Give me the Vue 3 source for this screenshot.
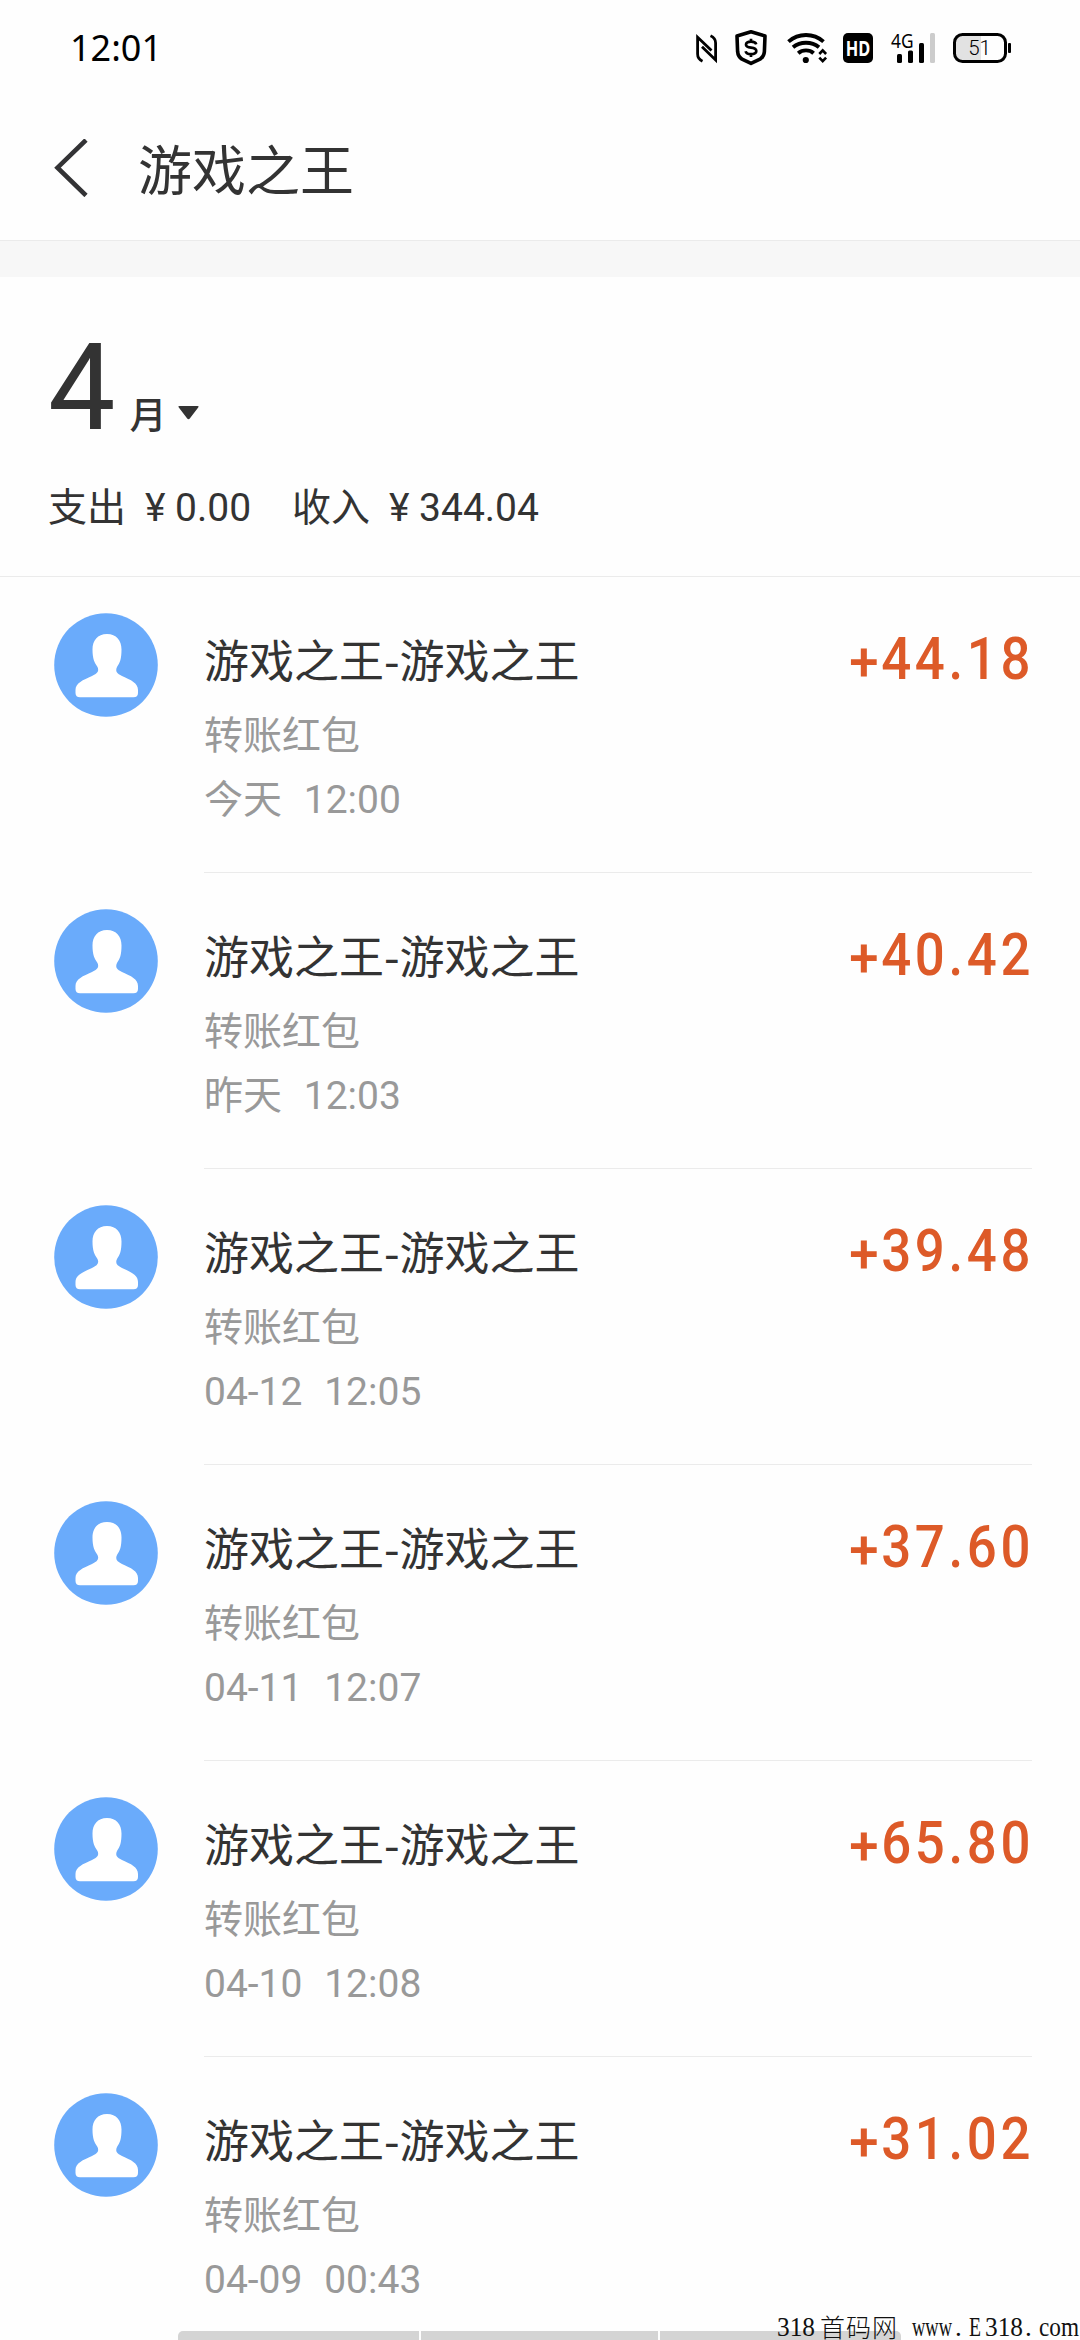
<script setup>
const entries = [
  { time: '今天  12:00', amount: '44.18' },
  { time: '昨天  12:03', amount: '40.42' },
  { time: '04-12  12:05', amount: '39.48' },
  { time: '04-11  12:07', amount: '37.60' },
  { time: '04-10  12:08', amount: '65.80' },
  { time: '04-09  00:43', amount: '31.02' },
]
</script>

<template>
  <div class="screen">
    <header class="status">
      <span class="clock">12:01</span>
      <svg class="status-icons" width="324" height="40" viewBox="690 28 324 40" fill="none" stroke="#000">
        <!-- nfc -->
        <path d="M702.5 61.2Q697.6 59 697.6 54V37.2L711.5 50.5M710.5 35.8Q715.6 38 715.6 43V60L702 46.8" stroke-width="2.8" />
        <!-- shield -->
        <path d="M751 31.8 765 36 764.4 51.5Q764 56.5 760 59.2L751 63.4 742 59.2Q738 56.5 737.6 51.5L737 36Z" stroke-width="3.6" stroke-linejoin="round" />
        <path d="M756.2 44.3Q755.5 41.6 751 41.6 746 41.6 746 44.8 746 47.2 751 47.7 756.3 48.3 756.3 51 756.3 54.1 751 54.1 746.3 54.1 745.6 51.2M751 38.8V41.8M751 54V56.9" stroke-width="2.7" />
        <!-- wifi -->
        <path d="M788.5 41.6Q796 35 806 35T823.5 41.6M793 47.2Q798.500 42.800 806 42.800T819 47.200M798.2 53.2Q801.500 50.400 806 50.400T813.600 53.200" stroke-width="3.9" />
        <circle cx="805.8" cy="60" r="3.1" fill="#000" stroke="none" />
        <path d="M819.300 54 822.700 50.400 826.100 54M819.300 57.600 822.700 61.200 826.100 57.600" stroke-width="2.600" />
        <!-- hd -->
        <rect x="843" y="33" width="30" height="30" rx="5" fill="#000" stroke="none" />
        <text class="hd" x="858" y="56" text-anchor="middle" textLength="24.500" lengthAdjust="spacingAndGlyphs">HD</text>
        <!-- signal -->
        <text class="net" x="891" y="47.500" textLength="22.500" lengthAdjust="spacingAndGlyphs">4G</text>
        <g fill="#000" stroke="none">
          <rect x="897" y="54" width="5" height="9" rx="1.500" />
          <rect x="908" y="50.500" width="5" height="12.500" rx="1.500" />
          <rect x="919" y="43" width="5" height="20" rx="1.500" />
          <rect x="930" y="33" width="5" height="30" rx="1.500" fill="#ccc" />
        </g>
        <!-- battery -->
        <path d="M981 35H963Q955 35 955 43V53Q955 61 963 61H981Z" fill="#e2e2e2" stroke="none" />
        <rect x="954.500" y="34.500" width="51" height="27" rx="8" stroke-width="3" />
        <rect x="1008" y="43" width="3" height="10" rx="1" fill="#000" stroke="none" />
        <text class="level" x="979.500" y="55" text-anchor="middle">51</text>
      </svg>
    </header>

    <nav class="bar">
      <svg class="back" width="34" height="58" viewBox="54 139 34 58" fill="none" stroke="#333335" stroke-width="4.600">
        <path d="M86 140 57.500 167.700 86 195.500" />
      </svg>
      <h1>游戏之王</h1>
    </nav>
    <div class="gap"></div>

    <section class="summary">
      <div class="month">
        <span class="num">4</span>
        <span class="unit">月</span>
        <svg class="caret" width="21" height="14" viewBox="0 0 21 14"><path d="M1.500 0H19.500Q21.500 0 20 1.800L11.800 12.600Q10.500 14 9.200 12.600L1 1.800Q-.5 0 1.500 0Z" fill="#333" /></svg>
      </div>
      <div class="totals">
        <span class="label">支出</span><span class="yen">¥</span><span class="sum">0.00</span>
        <span class="label second">收入</span><span class="yen">¥</span><span class="sum">344.04</span>
      </div>
    </section>

    <main>
      <article v-for="e in entries" :key="e.time" class="row">
        <svg class="avatar" width="104" height="104" viewBox="0 0 104 104">
          <circle cx="52" cy="52" r="51.800" fill="#6aabfb" />
          <path d="M53 21C43.500 21 38.500 27.500 38.500 36.500C38.500 46 40.500 49.500 43.500 54C45.500 58.500 43 60.500 38 63C29 67 21.500 70 21.500 77V80Q21.500 84.200 26 84.200H79.500Q84 84.200 84 80V77C84 70 77 67 68 63C63 60.500 61 58.500 63 54C66 49.500 67.500 46 67.500 36.500C67.500 27.500 62.500 21 53 21Z" fill="#fff" />
        </svg>
        <div class="body">
          <div class="info">
            <div class="name">游戏之王-游戏之王</div>
            <div class="kind">转账红包</div>
            <div class="time">{{ e.time }}</div>
          </div>
          <div class="amount"><span class="plus">+</span>{{ e.amount }}</div>
        </div>
      </article>
    </main>

    <div class="scroll"><i></i><i></i><i></i></div>
    <svg class="mark" width="306" height="34" viewBox="774 2306 306 34">
      <text x="777" y="2336" textLength="38" lengthAdjust="spacingAndGlyphs">318</text>
      <text x="820" y="2337" class="han" textLength="77">首码网</text>
      <text x="912" y="2336" textLength="40" lengthAdjust="spacingAndGlyphs">www</text>
      <text x="955" y="2336">.</text>
      <text x="969" y="2336" textLength="12" lengthAdjust="spacingAndGlyphs">E</text>
      <text x="985" y="2336" textLength="38" lengthAdjust="spacingAndGlyphs">318</text>
      <text x="1025" y="2336">.</text>
      <text x="1039" y="2336" textLength="40" lengthAdjust="spacingAndGlyphs">com</text>
    </svg>
  </div>
</template>

<style>
body {
  background: #fff;
}
</style>

<style scoped>
.screen {
  position: relative;
  width: 1080px;
  height: 2340px;
  overflow: hidden;
  background: #fefefe;
  color: #333;
  font-family: Roboto, "Noto Sans CJK SC", sans-serif;
}
.status {
  display: flex;
  justify-content: space-between;
  align-items: center;
  box-sizing: border-box;
  height: 96px;
  padding: 0 66px 0 70px;
}
.clock {
  font: 400 36px/50px "Noto Sans", sans-serif;
  color: #000;
}
.status-icons text {
  stroke: none;
  fill: #000;
}
.status-icons .hd {
  font: 700 22px "Noto Sans", sans-serif;
  fill: #fff;
}
.status-icons .net {
  font: 400 20px "Noto Sans", sans-serif;
}
.status-icons .level {
  font: 300 20.5px Roboto, sans-serif;
}
.bar {
  display: flex;
  align-items: center;
  box-sizing: border-box;
  height: 144px;
  padding-left: 54px;
}
h1 {
  margin: 0 0 0 50px;
  font: 400 54px/80px "Noto Sans CJK SC", sans-serif;
}
.gap {
  box-sizing: border-box;
  height: 37px;
  border-top: 1px solid #ebebeb;
  background: #f7f7f7;
}
.summary {
  box-sizing: border-box;
  height: 300px;
  padding: 41px 48px 0;
  border-bottom: 1px solid #ebebeb;
}
.month {
  display: flex;
  align-items: baseline;
  height: 140px;
}
.num {
  font-size: 120px;
  line-height: 140px;
}
.unit {
  margin-left: 14px;
  font: 500 37px/50px "Noto Sans CJK SC", sans-serif;
}
.caret {
  margin-left: 12px;
  transform: translateY(-9px);
}
.totals {
  display: flex;
  align-items: baseline;
  margin-top: 17px;
  font-size: 39px;
  line-height: 58px;
}
.label {
  font-family: "Noto Sans CJK SC", sans-serif;
}
.second {
  margin-left: 41px;
}
.yen {
  width: 30px;
  margin-left: 19px;
}
.row {
  display: flex;
  height: 296px;
}
.avatar {
  flex: none;
  margin: 36px 46px 0 54px;
}
.body {
  display: flex;
  justify-content: space-between;
  box-sizing: border-box;
  width: 828px;
  border-bottom: 1px solid #ebebeb;
}
.name {
  margin-top: 49px;
  font: 400 45px/66px "Noto Sans CJK SC", sans-serif;
}
.kind {
  margin-top: 11px;
  color: #999;
  font: 400 39px/58px "Noto Sans CJK SC", sans-serif;
}
.time {
  margin-top: 10px;
  color: #999;
  font-size: 39px;
  line-height: 58px;
  white-space: pre;
  word-spacing: 1.2px;
}
.amount {
  margin: 47px -2px 0 0;
  color: #dd5a28;
  font-size: 60px;
  font-weight: 500;
  line-height: 70px;
  letter-spacing: 4.1px;
  transform: scaleX(0.88);
  transform-origin: right;
}
.plus {
  display: inline-block;
  margin-right: -1px;
  transform: translateY(3px) scaleY(0.9);
}
.scroll {
  position: absolute;
  left: 178px;
  bottom: 0;
  display: grid;
  grid-template-columns: 241px 237px 241px;
  gap: 2px;
  width: 723px;
  height: 9px;
  border-radius: 5px 5px 0 0;
  overflow: hidden;
}
.scroll i {
  background: #d4d4d4;
}
.mark {
  position: absolute;
  right: 0;
  bottom: 0;
  overflow: visible;
}
.mark text {
  font: 27px "Liberation Serif", serif;
  fill: #111;
}
.mark .han {
  font: 300 25px "Noto Sans CJK SC", sans-serif;
}
</style>
